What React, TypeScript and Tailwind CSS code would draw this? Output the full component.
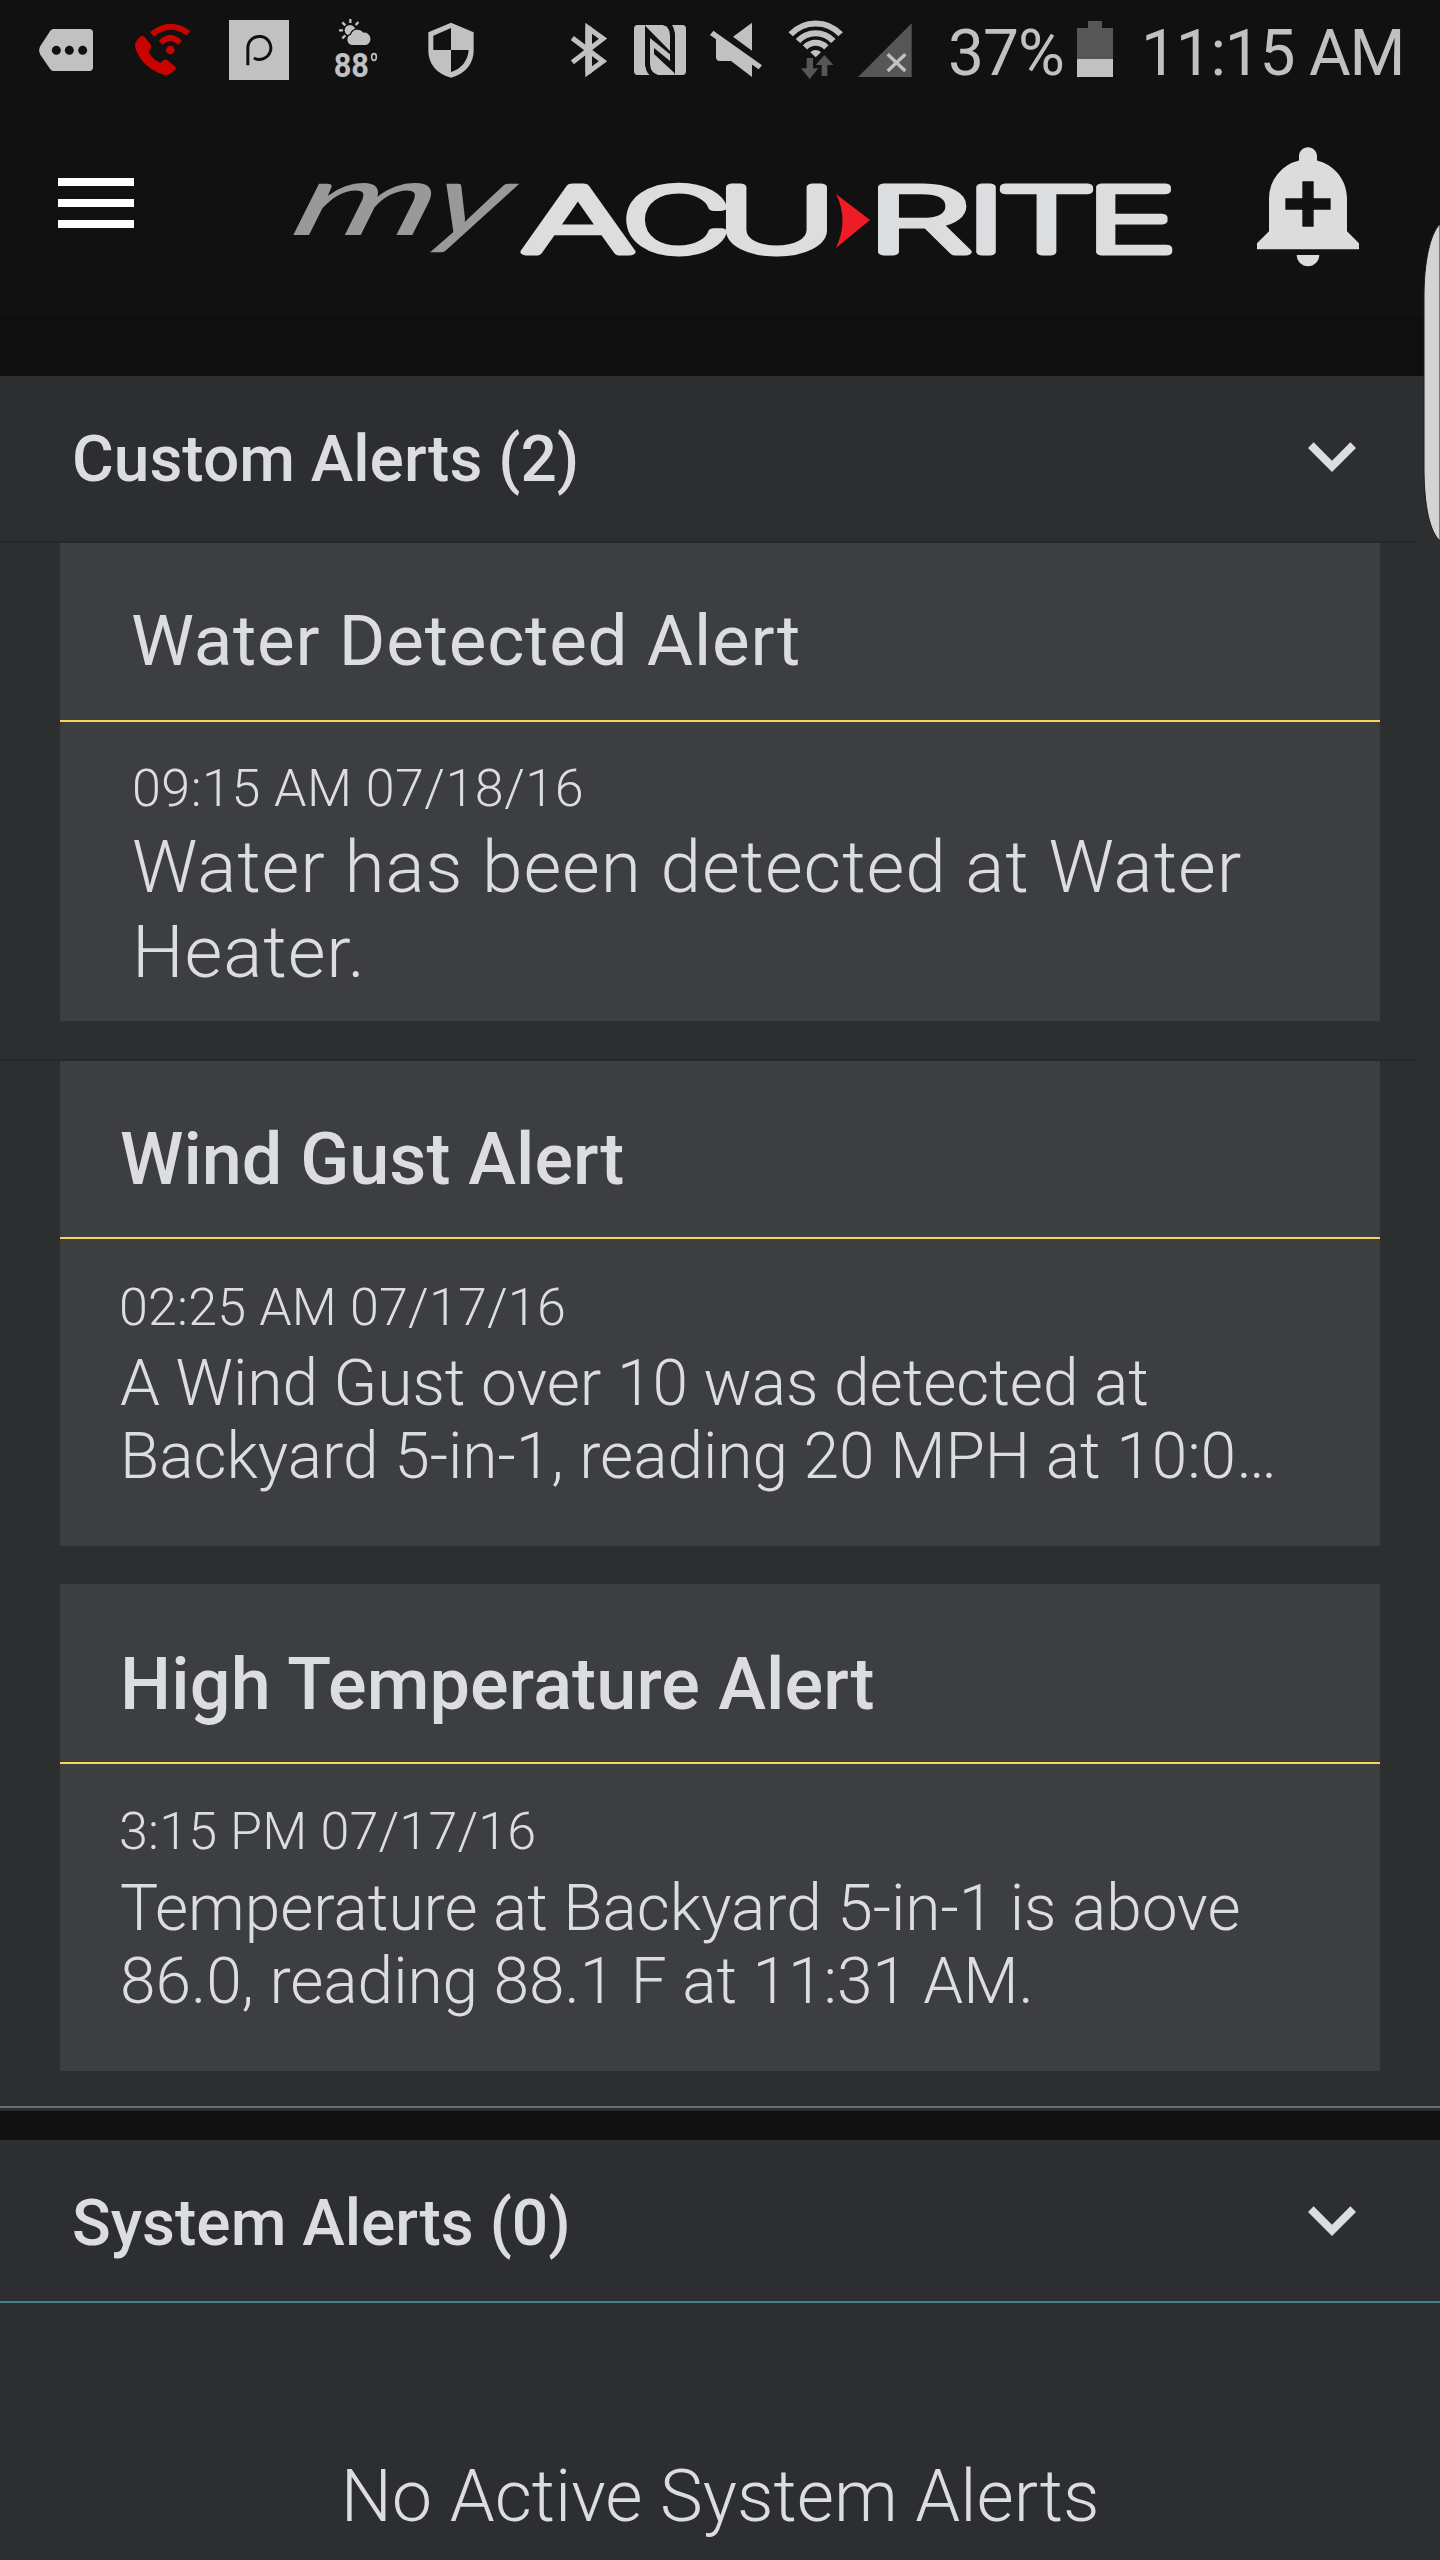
import React from "react";
import { MdAddAlert, MdExpandMore } from "react-icons/md";

interface Alert {
  id: number;
  title: string;
  time: string;
  lines: string[];
  cardClass: string;
  titleClass: string;
  bodyClass: string;
  timeClass: string;
  messageClass: string;
}

const alerts: Alert[] = [
  {
    id: 1,
    title: "Water Detected Alert",
    time: "09:15 AM 07/18/16",
    lines: ["Water has been detected at Water", "Heater."],
    cardClass: "h-[479px]",
    titleClass: "h-[178px] pl-[71px] pt-5 text-[71px] font-normal tracking-[0.8px]",
    bodyClass: "pl-[72px] pt-[36px]",
    timeClass: "mb-[5px] text-[52px] tracking-[0.5px]",
    messageClass: "text-[73px] leading-[85px] tracking-[0.9px]",
  },
  {
    id: 2,
    title: "Wind Gust Alert",
    time: "02:25 AM 07/17/16",
    lines: ["A Wind Gust over 10 was detected at", "Backyard 5-in-1, reading 20 MPH at 10:0…"],
    cardClass: "mt-10 h-[485px]",
    titleClass: "h-[176px] pl-[60px] pt-[22px] text-[72px] font-medium",
    bodyClass: "pl-[60px] pt-[38px]",
    timeClass: "-ml-px mb-[8px] text-[52px] tracking-[0.2px]",
    messageClass: "text-[64px] leading-[73px] tracking-[-0.02px]",
  },
  {
    id: 3,
    title: "High Temperature Alert",
    time: "3:15 PM 07/17/16",
    lines: ["Temperature at Backyard 5-in-1 is above", "86.0, reading 88.1 F at 11:31 AM."],
    cardClass: "mt-[38px] h-[487px]",
    titleClass: "h-[178px] pl-[60px] pt-[23px] text-[72px] font-medium tracking-[0.15px]",
    bodyClass: "pl-[60px] pt-[37px]",
    timeClass: "-ml-px mb-[9px] text-[52px] tracking-[0.2px]",
    messageClass: "text-[64px] leading-[73px] tracking-[-0.05px]",
  },
];

const StatusBar: React.FC = () => {
  return (
    <div className="flex h-[100px] shrink-0 items-start pl-[39px] text-[#c1c1c1]">
      {/* message tag */}
      <svg className="h-[100px] w-[54px] shrink-0" viewBox="117 0 162 300" fill="currentColor">
        <path d="M160 87H268q11 0 11 11V202q0 11-11 11H160q-5 0-9-5L121 164q-7-13 0-26L151 92q4-5 9-5Z" />
        <g fill="#111">
          <circle cx="169" cy="151" r="13.5" />
          <circle cx="208" cy="151" r="13.5" />
          <circle cx="248" cy="151" r="13.5" />
        </g>
      </svg>
      {/* wifi calling */}
      <svg className="ml-[42px] h-[100px] w-[56px] shrink-0" viewBox="405 0 168 300" fill="#c90300">
        <path d="M427 108q4-1 7 3l17 22q5 6 1 12l-6 10q12 24 36 34l8-8q7-5 13 0l21 18q6 5 2 10l-12 11q-10 8-23 4q-61-20-82-72q-6-13-3-22q8-20 21-22Z" />
        <circle cx="511" cy="150" r="13" />
        <path d="M456 103Q511 59 565 100" fill="none" stroke="#c90300" strokeWidth="18" />
        <path d="M482 128Q511 100 540 128" fill="none" stroke="#c90300" strokeWidth="17" />
      </svg>
      {/* parking app */}
      <svg className="ml-[38px] h-[100px] w-[60px] shrink-0" viewBox="687 0 180 300" fill="currentColor">
        <rect x="687" y="60" width="180" height="180" />
        <path d="M743.500 196V144a34.500 34.500 0 1 1 18 30" fill="none" stroke="#111" strokeWidth="9" />
      </svg>
      {/* weather */}
      <svg className="ml-[45px] h-[100px] w-[44px] shrink-0" viewBox="1002 0 132 300" fill="currentColor">
        <circle cx="1050" cy="91" r="16" />
        <path
          d="M1051 57V69M1017 91H1029M1027 67L1036 76M1075 66L1067 75M1027 115L1036 106"
          stroke="currentColor"
          strokeWidth="7"
        />
        <path
          d="M1056 135a16 16 0 0 1-3-31a21 21 0 0 1 37-6a19 19 0 0 1 8 37Z"
          stroke="#111"
          strokeWidth="8"
          paintOrder="stroke"
        />
        <text x="1001" y="231" fontFamily="Roboto" fontSize="102" fontWeight="700" textLength="106" lengthAdjust="spacingAndGlyphs">
          88
        </text>
        <ellipse cx="1122" cy="171" rx="7" ry="10" fill="none" stroke="currentColor" strokeWidth="5" />
      </svg>
      {/* shield */}
      <svg className="ml-[50px] h-[100px] w-[46px] shrink-0" viewBox="1284 0 138 300" fill="currentColor">
        <path d="M1353 68L1421 97V152C1421 190 1395 222 1353 233C1310 222 1285 190 1285 152V97Z" />
        <path d="M1353 84L1300 107V150H1353ZM1353 150H1406C1404 180 1385 207 1353 216Z" fill="#111" />
      </svg>
      {/* bluetooth */}
      <svg className="ml-[97px] h-[100px] w-[38px] shrink-0" viewBox="95 0 114 300">
        <path d="M99 114L191 184L146 217V83L191 116L99 187" fill="none" stroke="currentColor" strokeWidth="15" strokeMiterlimit="2" />
        <path d="M138 68L158 83V217L138 232Z" fill="currentColor" />
      </svg>
      {/* nfc */}
      <svg className="ml-[25px] h-[100px] w-[52px] shrink-0" viewBox="282 0 156 300" fill="currentColor">
        <rect x="282" y="75" width="156" height="150" rx="11" />
        <path d="M315 75H378Q405 80 405 112V225H343Q315 222 315 185Z" fill="#111" />
        <path d="M382 75H396Q405 88 405 112V130L391 130V112Q391 84 372 75Z" fill="#111" />
        <path d="M329 225Q315 215 315 180V160H330V190Q330 216 346 225Z" fill="#111" />
        <path d="M316 75H368Q390 80 390 106V153L316 78Z" />
        <path d="M330 114L390 163V183L342 144V162L404 220V225H354Q330 219 330 190Z" />
      </svg>
      {/* muted speaker */}
      <svg className="ml-6 h-[100px] w-[52px] shrink-0" viewBox="510 0 156 300" fill="currentColor">
        <path d="M579 110L636 68V152Z" />
        <path d="M528 112V170q0 13 12 13H573L636 231V192L535 112Z" />
        <path d="M510 105L520 92L666 196L656 208Z" />
      </svg>
      {/* wifi with traffic arrows */}
      <svg className="ml-[26px] h-[100px] w-[55px] shrink-0" viewBox="743 0 165 300">
        <g fill="none" stroke="currentColor" strokeWidth="18">
          <path d="M751 103A102 102 0 0 1 901 103" />
          <path d="M773 123A72 72 0 0 1 879 123" />
          <path d="M794 142A44 44 0 0 1 858 142" />
        </g>
        <path d="M810 157A22 22 0 0 1 842 157L826 172Z" fill="currentColor" />
        <path d="M799 174H818V205H834L808 237L782 205H799ZM852 165L879 195H861V228H844V195H826Z" fill="#565656" />
      </svg>
      {/* cell signal */}
      <svg className="ml-[15px] h-[100px] w-[54px] shrink-0" viewBox="954 0 162 300">
        <path d="M954 231L1115 70V231Z" fill="#565656" />
        <path d="M1043 163L1096 213M1096 163L1043 213" stroke="currentColor" strokeWidth="10" />
      </svg>
      <span className="ml-[36px] w-[129px] shrink-0 text-[64px] leading-[107px] tracking-[-1px]">37%</span>
      <svg className="h-[100px] w-9 shrink-0" viewBox="0 0 36 100">
        <path d="M0 28H11V21H25V28H36V59H0Z" fill="#565656" />
        <path d="M0 59H36V77H0Z" fill="currentColor" />
      </svg>
      <span className="ml-[28px] whitespace-nowrap text-[64px] leading-[107px] tracking-[-1.2px]">11:15 AM</span>
    </div>
  );
};

const Logo: React.FC = () => {
  return (
    <svg className="h-[100px] w-[884px] shrink-0 overflow-visible" viewBox="290 170 884 100" strokeLinejoin="round">
      <g fontFamily="Lato" fontStyle="italic" fontWeight="400" fill="#999">
        <text transform="translate(292 235) skewX(-16)" fontSize="101">
          <tspan x="-4" textLength="142" lengthAdjust="spacingAndGlyphs">m</tspan>
          <tspan x="134" textLength="76" lengthAdjust="spacingAndGlyphs">y</tspan>
        </text>
      </g>
      <g fontFamily="Inter" fontWeight="200" fill="#dcdddf" stroke="#dcdddf" strokeWidth="7">
        <text y="252" fontSize="89">
          <tspan x="522" textLength="112" lengthAdjust="spacingAndGlyphs">A</tspan>
          <tspan x="622" textLength="109" lengthAdjust="spacingAndGlyphs">C</tspan>
          <tspan x="717" textLength="119" lengthAdjust="spacingAndGlyphs">U</tspan>
        </text>
        <text y="252" fontSize="89">
          <tspan x="867" textLength="105" lengthAdjust="spacingAndGlyphs">R</tspan>
          <tspan x="966" textLength="40" lengthAdjust="spacingAndGlyphs">I</tspan>
          <tspan x="997" textLength="99" lengthAdjust="spacingAndGlyphs">T</tspan>
          <tspan x="1086" textLength="91" lengthAdjust="spacingAndGlyphs">E</tspan>
        </text>
      </g>
      <path d="M836 194L870 220L836 248Q849 220 836 194Z" fill="#ee1c24" />
    </svg>
  );
};

const Header: React.FC = () => {
  return (
    <header className="flex h-[216px] shrink-0 items-start pl-[58px]">
      <button className="mt-[78px] flex w-[76px] flex-col gap-[13px]">
        <span className="h-2 w-full bg-white" />
        <span className="h-2 w-full bg-white" />
        <span className="h-2 w-full bg-white" />
      </button>
      <div className="ml-[156px] mt-[70px]">
        <Logo />
      </div>
      <MdAddAlert className="ml-[66px] mt-9 h-[136px] w-[136px] shrink-0 text-[#dcdcdc]" />
    </header>
  );
};

const AlertCard: React.FC<{ alert: Alert }> = ({ alert }) => {
  return (
    <article className={`mx-[60px] shrink-0 bg-[#3d3e40] ${alert.cardClass}`}>
      <h3 className={`flex items-center whitespace-nowrap ${alert.titleClass}`}>{alert.title}</h3>
      <div className="h-0.5 bg-[#f9d654]" />
      <div className={`whitespace-nowrap font-light ${alert.bodyClass}`}>
        <p className={`leading-[62px] ${alert.timeClass}`}>{alert.time}</p>
        {alert.lines.map((line) => (
          <p key={line} className={alert.messageClass}>
            {line}
          </p>
        ))}
      </div>
    </article>
  );
};

const App: React.FC = () => {
  return (
    <div className="relative flex h-[2560px] w-[1440px] flex-col overflow-hidden bg-[#111111] font-['Roboto',sans-serif] text-[#dcdddf]">
      <StatusBar />
      <Header />
      <div className="h-[60px] shrink-0 bg-[#0f0f0f]" />

      <section className="flex h-[1730px] shrink-0 flex-col bg-[#2d2e30]">
        <div className="flex h-[166px] shrink-0 items-start justify-between pl-[72px] pr-[60px]">
          <h2 className="text-[64px] font-medium leading-[168px]">Custom Alerts (2)</h2>
          <MdExpandMore className="mt-8 h-24 w-24" />
        </div>
        {alerts.map((alert) => (
          <AlertCard key={alert.id} alert={alert} />
        ))}
      </section>
      <div className="h-0.5 shrink-0 bg-[#6a6b6e]" />
      <div className="h-[3px] shrink-0 bg-[#2d2e30]" />
      <div className="h-[29px] shrink-0 bg-[#111111]" />

      <section className="flex flex-1 flex-col bg-[#2d2e30]">
        <div className="flex h-[161px] items-start justify-between pl-[72px] pr-[60px]">
          <h2 className="text-[64px] font-medium leading-[167px]">System Alerts (0)</h2>
          <MdExpandMore className="mt-8 h-24 w-24" />
        </div>
        <div className="h-0.5 bg-[#43808f]" />
        <p className="mt-[152px] text-center text-[72px] font-light leading-[84px]">No Active System Alerts</p>
      </section>

      {/* faint seams beside the cards */}
      <div className="absolute left-0 top-[541px] h-0.5 w-[1415px] bg-[#262729]" />
      <div className="absolute left-0 top-[1059px] h-0.5 w-[1415px] bg-[#262729]" />

      {/* edge panel handle */}
      <svg className="absolute right-0 top-[222px] h-[322px] w-[18px]" viewBox="0 0 18 322">
        <path d="M18 2C8 12 2 40 2 75V245C2 285 8 310 18 319Z" fill="#d3d3d3" stroke="#1b1b1b" strokeWidth="1" />
      </svg>
    </div>
  );
};

export default App;
